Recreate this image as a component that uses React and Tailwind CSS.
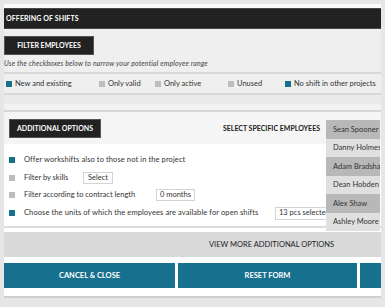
import React from 'react'

const font = { fontFamily: 'Lato, "Open Sans", sans-serif' }

const filters = [
  { label: 'New and existing', on: true, w: 'w-[93px]' },
  { label: 'Only valid', on: false, w: 'w-[56px]' },
  { label: 'Only active', on: false, w: 'w-[73px]' },
  { label: 'Unused', on: false, w: 'w-[57px]' },
  { label: 'No shift in other projects', on: true, w: '' },
]

const employees = ['Sean Spooner', 'Danny Holmes', 'Adam Bradshaw', 'Dean Hobden', 'Alex Shaw', 'Ashley Moore']

function Box({ on }) {
  return <span className={`inline-block w-[6px] h-[6px] shrink-0 ${on ? 'bg-[#17708c]' : 'bg-[#bdbdbd]'}`} />
}

export default function App() {
  return (
    <div className="w-[385px] h-[307px] overflow-hidden bg-[#e6e6e6] px-[4px] pt-[4px]" style={font}>
      <div className="relative bg-[#efefef] text-[#333]">
        <div className="h-[4px] bg-[#fafafa]" />

        {/* Header */}
        <div className="h-[21px] bg-[#222] border-y border-[#484848] flex items-center px-[2px]">
          <span className="text-white font-bold text-[7px] tracking-[0.1px]">OFFERING OF SHIFTS</span>
        </div>

        {/* Filter */}
        <div className="pt-[7px]">
          <div className="w-[90px] h-[19px] bg-[#222] border border-[#555] flex items-center justify-center text-white font-bold text-[7px]">
            FILTER EMPLOYEES
          </div>
          <div className="h-[17px] flex items-center text-[7px] italic text-[#444] tracking-[0.15px]">
            Use the checkboxes below to narrow your potential employee range
          </div>
          <div className="border-y-2 border-[#d8d8d8] h-[23px] flex items-center pl-[2px] text-[7.5px]">
            {filters.map((f) => (
              <div key={f.label} className={`flex items-center gap-[2px] ${f.w} shrink-0`}>
                <Box on={f.on} />
                <span className="ml-[1px]">{f.label}</span>
              </div>
            ))}
          </div>
        </div>

        <div className="h-[9px] bg-[#eaeaea]" />
        <div className="h-[8px] bg-[#f2f2f2] border-b-2 border-[#d6d6d6]" />

        {/* Additional options header */}
        <div className="h-[32px] bg-[#f5f5f5] flex items-center pl-[5px] pr-[61px]">
          <div className="w-[92px] h-[19px] bg-[#222] border border-[#555] flex items-center justify-center text-white font-bold text-[7px]">
            ADDITIONAL OPTIONS
          </div>
          <span className="ml-auto font-bold text-[7px] text-[#222]">SELECT SPECIFIC EMPLOYEES</span>
        </div>

        {/* Options */}
        <div className="bg-white pl-[5px] pt-[7px] pb-[4px] text-[7.5px] border-b-2 border-[#dcdcdc]">
          <div className="h-[18px] flex items-center">
            <Box on />
            <span className="ml-[9px] tracking-[0.1px]">Offer workshifts also to those not in the project</span>
          </div>
          <div className="h-[17px] flex items-center">
            <Box />
            <span className="ml-[9px] w-[59px]">Filter by skills</span>
            <span className="border border-[#d4d4d4] px-[4px] h-[12px] flex items-center">Select</span>
          </div>
          <div className="h-[18px] flex items-center">
            <Box />
            <span className="ml-[9px] w-[132px]">Filter according to contract length</span>
            <span className="border border-[#d4d4d4] px-[3px] h-[12px] flex items-center">0 months</span>
          </div>
          <div className="h-[18px] flex items-center">
            <Box on />
            <span className="ml-[9px] w-[251px] tracking-[0.1px]">Choose the units of which the employees are available for open shifts</span>
            <span className="border border-[#d4d4d4] px-[3px] h-[13px] flex items-center w-[60px] whitespace-nowrap overflow-hidden">13 pcs selected</span>
          </div>
        </div>

        {/* View more */}
        <div className="bg-white pt-[4px] pb-[6px]">
          <div className="h-[25px] bg-[#d9d9d9] flex items-center pl-[205px] text-[7.5px] text-[#222]">
            VIEW MORE ADDITIONAL OPTIONS
          </div>
        </div>

        {/* Actions */}
        <div className="bg-white flex gap-[3px] pb-[8px] border-b-2 border-[#cfcfcf]">
          <button className="w-[171px] h-[25px] bg-[#17718e] text-white font-bold text-[7.5px]">CANCEL &amp; CLOSE</button>
          <button className="w-[179px] h-[25px] bg-[#17718e] text-white font-bold text-[7.5px]">RESET FORM</button>
          <button className="flex-1 h-[25px] bg-[#17718e]" />
        </div>

        {/* Employee dropdown */}
        <div className="absolute left-[322px] top-[116px] w-[54px] text-[7.5px] text-[#333]">
          {employees.map((e, i) => (
            <div
              key={e}
              className={`h-[18.5px] flex items-center pl-[7px] whitespace-nowrap overflow-hidden ${i % 2 === 0 ? 'bg-[#b8b8b8]' : 'bg-[#e0e0e0]'}`}
            >
              {e}
            </div>
          ))}
        </div>
      </div>
    </div>
  )
}
